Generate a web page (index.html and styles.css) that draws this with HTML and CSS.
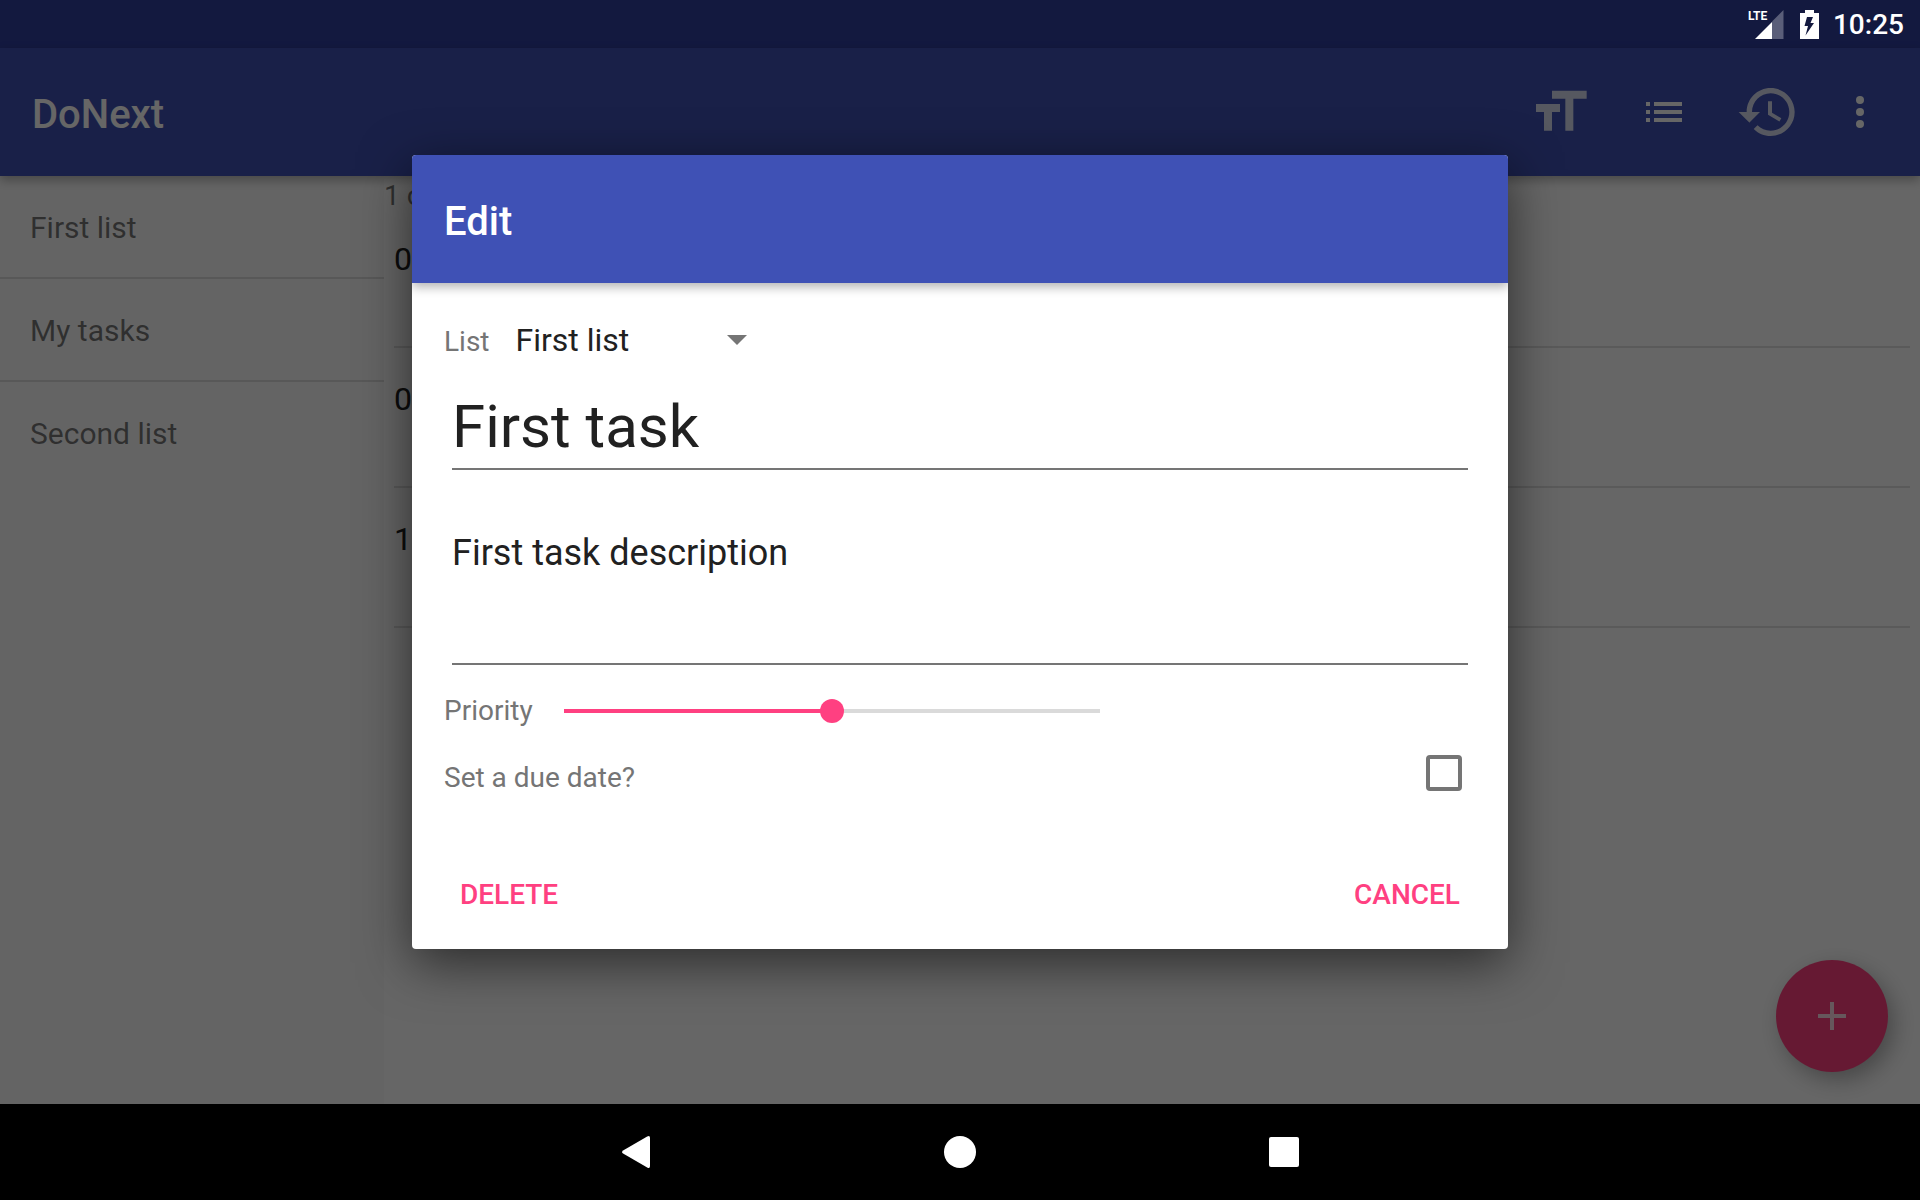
FILE: index.html
```html
<!DOCTYPE html>
<html lang="en">
<head>
<meta charset="utf-8">
<meta name="viewport" content="width=device-width, initial-scale=1">
<title>DoNext</title>
<link rel="stylesheet" href="styles.css">
</head>
<body>
<div class="screen">
  <div class="status-bar">
    <div class="status-icons">
      <span class="signal">
        <svg width="36" height="30" viewBox="0 0 36 30" aria-hidden="true">
          <path d="M24 11.500 35.500 0v29H24z" fill="#fff" fill-opacity=".3"/>
          <path d="M7 29 24 12v17z" fill="#fff"/>
        </svg>
        <span class="signal-type">LTE</span>
      </span>
      <svg class="battery" width="19" height="29" viewBox="0 0 19 29" aria-hidden="true">
        <path fill="#fff" fill-rule="evenodd" d="M5 0h9v3h5v26H0V3h5zM7 7 4.500 16H8l-2.500 9.500L14 13h-3.500L13 7z"/>
      </svg>
      <time class="clock">10:25</time>
    </div>
  </div>
  <header class="toolbar">
    <h1 class="toolbar-title">DoNext</h1>
    <nav class="actions">
      <button class="action" type="button" aria-label="Text size">
        <svg class="icon-large" viewBox="0 0 24 24"><path d="M9 4v3h5v12h3V7h5V4H9zm-6 8h3v7h3v-7h3V9H3v3z"/></svg>
      </button>
      <button class="action action-solid" type="button" aria-label="Lists">
        <svg class="icon" viewBox="0 0 24 24"><path d="M3 13h2v-2H3v2zm0 4h2v-2H3v2zm0-8h2V7H3v2zm4 4h14v-2H7v2zm0 4h14v-2H7v2zM7 7v2h14V7H7z"/></svg>
      </button>
      <button class="action" type="button" aria-label="History">
        <svg class="icon-large" viewBox="0 0 24 24"><path d="M13 3c-4.970 0-9 4.030-9 9H1l3.890 3.890.07.14L9 12H6c0-3.870 3.130-7 7-7s7 3.130 7 7-3.130 7-7 7c-1.930 0-3.680-.79-4.940-2.060l-1.420 1.420C8.270 19.990 10.510 21 13 21c4.970 0 9-4.030 9-9s-4.030-9-9-9zm-1 5v5l4.280 2.540.72-1.210-3.500-2.080V8H12z"/></svg>
      </button>
      <button class="action action-solid action-more" type="button" aria-label="More options">
        <svg class="icon" viewBox="0 0 24 24"><circle cx="12" cy="6" r="2"/><circle cx="12" cy="12" r="2"/><circle cx="12" cy="18" r="2"/></svg>
      </button>
    </nav>
  </header>
  <div class="content">
    <nav class="sidebar">
      <a class="list-link" href="#first">First list</a>
      <a class="list-link" href="#mine">My tasks</a>
      <a class="list-link" href="#second">Second list</a>
    </nav>
    <main class="tasks">
      <p class="tasks-summary">1 o</p>
      <ul class="task-list">
        <li class="task">0</li>
        <li class="task">0</li>
        <li class="task">1</li>
      </ul>
    </main>
  </div>
  <button class="fab" type="button" aria-label="New task">
    <svg class="icon" viewBox="0 0 24 24"><path d="M19 13h-6v6h-2v-6H5v-2h6V5h2v6h6v2z"/></svg>
  </button>

  <div class="scrim">
    <form class="dialog" role="dialog" aria-labelledby="dialog-title">
      <h2 class="dialog-title" id="dialog-title">Edit</h2>
      <div class="dialog-body">
        <div class="list-row">
          <label class="label" for="list">List</label>
          <span class="select-wrap">
            <select class="select" id="list">
              <option selected>First list</option>
              <option>My tasks</option>
              <option>Second list</option>
            </select>
            <svg class="select-arrow" width="20" height="10" viewBox="0 0 20 10" aria-hidden="true"><path d="M0 0h20L10 10z"/></svg>
          </span>
        </div>
        <input class="field field-title" type="text" value="First task" aria-label="Title">
        <textarea class="field field-description" rows="3" aria-label="Description">First task description</textarea>
        <div class="priority-row">
          <label class="label" for="priority">Priority</label>
          <input class="slider" id="priority" type="range" min="0" max="2" value="1">
        </div>
        <div class="due-row">
          <label class="label" for="due">Set a due date?</label>
          <input class="checkbox" id="due" type="checkbox">
        </div>
        <div class="buttons">
          <button class="text-button" type="button">DELETE</button>
          <button class="text-button" type="button">CANCEL</button>
        </div>
      </div>
    </form>
  </div>
</div>
<nav class="nav-bar">
  <button class="nav-button" type="button" aria-label="Back">
    <svg width="32" height="34" viewBox="0 0 32 34"><path d="M3.500 15.200 27.200 1.500Q30 0 30 3v28q0 3-2.800 1.500L3.500 18.800Q.5 17 3.500 15.200z"/></svg>
  </button>
  <button class="nav-button" type="button" aria-label="Home">
    <svg width="32" height="32" viewBox="0 0 32 32"><circle cx="16" cy="16" r="16"/></svg>
  </button>
  <button class="nav-button" type="button" aria-label="Recent apps">
    <svg width="30" height="30" viewBox="0 0 30 30"><rect width="30" height="30" rx="2"/></svg>
  </button>
</nav>
</body>
</html>
```

FILE: styles.css
```css
* {
  box-sizing: border-box;
}

body {
  display: flex;
  flex-direction: column;
  min-height: 100vh;
  margin: 0;
  background: #fff;
  color: #212121;
  font-family: Roboto, sans-serif;
}

button,
input,
select,
textarea {
  margin: 0;
  padding: 0;
  border: 0;
  background: none;
  color: inherit;
  font: inherit;
}

.screen {
  position: relative;
  display: flex;
  flex: 1;
  flex-direction: column;
}

/* Status bar */

.status-bar {
  display: flex;
  justify-content: flex-end;
  height: 48px;
  padding: 2px 16px 0 0;
  background: #303f9f;
}

.status-icons {
  position: relative;
  z-index: 3;
  display: flex;
  align-items: center;
  gap: 14px;
  color: #fff;
}

.signal {
  position: relative;
  display: flex;
  padding-right: 2px;
}

.signal-type {
  position: absolute;
  top: 0;
  left: 0;
  font-size: 12px;
  font-weight: 700;
  line-height: 12px;
}

.clock {
  font-size: 28px;
  font-weight: 500;
  line-height: 46px;
}

.battery {
  margin-bottom: 2px;
}

/* Toolbar */

.toolbar {
  position: relative;
  display: flex;
  align-items: center;
  justify-content: space-between;
  height: 128px;
  padding: 0 24px 0 32px;
  background: #3f51b5;
  box-shadow: 0 4px 10px rgba(0, 0, 0, .3);
}

.toolbar-title,
.dialog-title {
  margin: 0;
  color: #fff;
  font-size: 40px;
  font-weight: 500;
}

.toolbar-title {
  line-height: 48px;
  padding-top: 6px;
}

.actions {
  display: flex;
}

.action {
  display: flex;
  padding: 0 24px;
  align-items: center;
  fill: #fff;
  fill-opacity: .8;
}

.action-solid {
  fill-opacity: 1;
}

.action-more {
  padding: 0 12px;
}

.icon {
  width: 48px;
  height: 48px;
}

.icon-large {
  width: 64px;
  height: 64px;
}

/* Lists and tasks */

.content {
  display: flex;
  flex: 1;
}

.sidebar {
  width: 20%;
  background: #fafafa;
}

.list-link {
  display: block;
  padding: 33px 30px 31px;
  color: rgba(0, 0, 0, .54);
  font-size: 30px;
  line-height: 37px;
  text-decoration: none;
}

.list-link + .list-link {
  border-top: 2px solid rgba(0, 0, 0, .12);
}

.tasks {
  flex: 1;
}

.tasks-summary {
  margin: 0;
  padding-top: 8px;
  color: rgba(0, 0, 0, .54);
  font-size: 28px;
  line-height: 24px;
}

.task-list {
  margin: 0;
  padding: 0 10px;
  list-style: none;
}

.task {
  height: 140px;
  padding-top: 32px;
  border-bottom: 2px solid rgba(0, 0, 0, .12);
  font-size: 32px;
  line-height: 38px;
}

.fab {
  position: absolute;
  right: 32px;
  bottom: 32px;
  display: flex;
  align-items: center;
  justify-content: center;
  width: 112px;
  height: 112px;
  border-radius: 50%;
  background: #ff4081;
  box-shadow: 6px 8px 22px rgba(0, 0, 0, .3);
  fill: #fff;
  fill-opacity: .8;
}

/* Dialog */

.scrim {
  position: absolute;
  z-index: 2;
  inset: 0;
  display: flex;
  align-items: center;
  justify-content: center;
  overflow: hidden;
  background: rgba(0, 0, 0, .6);
}

.dialog {
  width: 100%;
  max-width: 1096px;
  overflow: hidden;
  border-radius: 4px;
  background: #fff;
  box-shadow: 0 14px 52px rgba(0, 0, 0, .58);
}

.dialog-title {
  position: relative;
  padding: 6px 32px 0;
  background: #3f51b5;
  box-shadow: 0 4px 10px rgba(0, 0, 0, .3);
  line-height: 122px;
}

.dialog-body {
  display: flex;
  flex-direction: column;
  padding: 33px 32px 19px;
}

.label {
  color: #757575;
  font-size: 28px;
  line-height: 40px;
}

.list-row {
  display: flex;
  align-items: baseline;
  gap: 26px;
}

.select-wrap {
  position: relative;
  width: 231px;
}

.select {
  width: 100%;
  height: 48px;
  appearance: none;
  font-size: 32px;
  line-height: 48px;
}

.select-arrow {
  position: absolute;
  top: 19px;
  right: 0;
  fill: #757575;
  pointer-events: none;
}

.field {
  display: block;
  margin: 0 8px;
  border-bottom: 2px solid #757575;
  border-radius: 0;
  resize: none;
}

.field-title {
  height: 80px;
  margin-top: 26px;
  padding-bottom: 6px;
  font-size: 60px;
}

.field-description {
  margin-top: 62px;
  padding-bottom: 5px;
  overflow: hidden;
  font-size: 36px;
  line-height: 42px;
}

.priority-row {
  display: flex;
  align-items: center;
  gap: 31px;
  margin-top: 26px;
}

.slider {
  width: 536px;
  height: 24px;
  appearance: none;
}

.slider::-webkit-slider-runnable-track {
  height: 4px;
  background: linear-gradient(to right, #ff4081 50%, #dadada 50%);
}

.slider::-webkit-slider-thumb {
  width: 24px;
  height: 24px;
  margin-top: -10px;
  appearance: none;
  border-radius: 50%;
  background: #ff4081;
}

.due-row {
  display: flex;
  align-items: center;
  justify-content: space-between;
  margin-top: 17px;
  padding-right: 14px;
}

.due-row .label {
  padding-top: 10px;
}

.checkbox {
  width: 36px;
  height: 36px;
  appearance: none;
  border: 4px solid #757575;
  border-radius: 4px;
}

.buttons {
  display: flex;
  justify-content: space-between;
  margin-top: 60px;
}

.text-button {
  height: 72px;
  padding: 0 16px;
  color: #ff4081;
  font-size: 28px;
  font-weight: 500;
}

/* System navigation */

.nav-bar {
  display: flex;
  justify-content: center;
  height: 96px;
  background: #000;
}

.nav-button {
  display: flex;
  align-items: center;
  justify-content: center;
  width: 324px;
  fill: #fff;
}
```
